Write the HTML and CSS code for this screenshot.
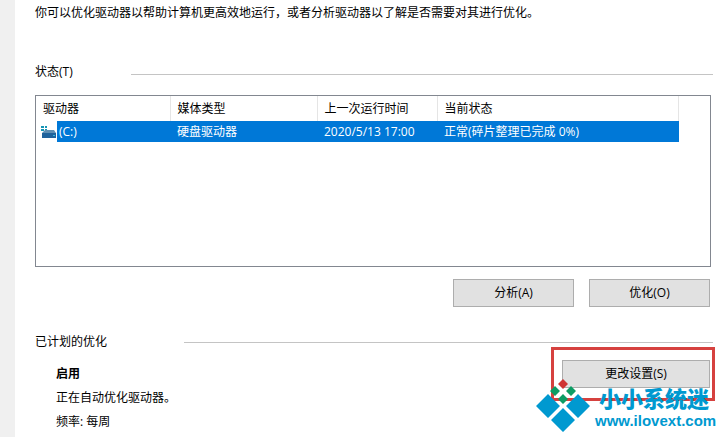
FILE: index.html
```
<!DOCTYPE html>
<html lang="zh-CN">
<head>
  <meta charset="UTF-8" />
  <meta name="viewport" content="width=device-width, initial-scale=1" />
  <title>优化驱动器</title>
  <link rel="stylesheet" href="styles.css">
</head>
<body>

  <main class="window">
    <p class="intro">你可以优化驱动器以帮助计算机更高效地运行，或者分析驱动器以了解是否需要对其进行优化。</p>

    <section class="status">
      <h2 class="section-title">状态(T)</h2>
      <div class="drive-list">
        <table aria-label="驱动器状态">
          <thead>
            <tr>
              <th scope="col" class="col-drive">驱动器</th>
              <th scope="col" class="col-media">媒体类型</th>
              <th scope="col" class="col-time">上一次运行时间</th>
              <th scope="col" class="col-state">当前状态</th>
            </tr>
          </thead>
          <tbody>
            <tr>
              <td class="drive-cell">
                <svg class="drive-icon" width="16" height="14" viewBox="0 0 16 14" aria-hidden="true">
                  <path fill="#1695b5" d="M0 1h3v2H0zM4 1h2v2H4zM0 4h3v2H0zM4 4h2v2H4z" />
                  <path fill="#5f8fb3" d="M4 5h9l2 3H1z" />
                  <path fill="#1f629c" d="M1 8h14v5H1z" />
                  <path fill="#39b8e0" d="M12 10h2v1h-2z" />
                </svg>
                <span class="drive-name">(C:)</span>
              </td>
              <td>硬盘驱动器</td>
              <td>2020/5/13 17:00</td>
              <td>正常(碎片整理已完成 0%)</td>
            </tr>
          </tbody>
        </table>
      </div>
      <div class="actions">
        <button type="button">分析(A)</button>
        <button type="button">优化(O)</button>
      </div>
    </section>

    <section class="schedule">
      <h2 class="section-title wide">已计划的优化</h2>
      <div class="schedule-body">
        <div class="schedule-info">
          <strong>启用</strong>
          <p>正在自动优化驱动器。</p>
          <p>频率: 每周</p>
        </div>
        <div class="settings">
          <button type="button">更改设置(S)</button>
          <div class="watermark">
            <svg width="54" height="54" viewBox="0 0 54 54" aria-hidden="true">
              <path fill="#d03434" d="M27 0l5 5-5 5-5-5z" />
              <path fill="#0c9c64" d="M19 7l5 5-5 5-5-5zM35 7l5 5-5 5-5-5zM27 15l5 5-5 5-5-5z" />
              <path fill="#0099d0" d="M12 15l12 12-12 12L0 27zM42 15l12 12-12 12-12-12zM27 29l12 12-12 12-12-12z" />
            </svg>
            <div class="brand">
              <span class="brand-name">小小系统迷</span>
              <span class="brand-url">www.ilovext.com</span>
            </div>
          </div>
        </div>
      </div>
    </section>
  </main>

</body>
</html>
```
FILE: styles.css
```
:root {
  --edge: #f0f0f0;
  --line: #c4c4c4;
  --frame: #828790;
  --select: #0078d7;
  --button: #e1e1e1;
  --mark: #d6413f;
  --brand: #0099d0;
}
* {
  box-sizing: border-box;
}
body {
  margin: 0;
  min-height: 100vh;
  border-left: 15px solid var(--edge);
  background-color: #fff;
  color: #000;
  font-family: "Open Sans", "Noto Sans CJK SC", sans-serif;
  font-size: 12px;
  line-height: 24px;
  overflow: hidden;
}
p {
  margin: 0;
}
.window {
  padding: 1px 12px 0 20px;
}
.section-title {
  display: flex;
  align-items: center;
  gap: 58px;
  margin: 0;
  font-size: 12px;
  font-weight: 400;
}
.section-title.wide {
  gap: 77px;
}
.section-title::after {
  content: "";
  flex: 1;
  height: 1px;
  margin-top: 4px;
  background-color: var(--line);
}
.section-title.wide::after {
  margin-top: 0;
}
.status {
  margin-top: 35px;
}
.drive-list {
  height: 172px;
  margin: 11px 2px 0 0;
  border: 1px solid var(--frame);
}
table {
  width: 643px;
  table-layout: fixed;
  border-collapse: collapse;
}
th, td {
  padding: 0 0 0 7px;
  text-align: left;
  font-weight: 400;
  white-space: nowrap;
}
th {
  height: 25px;
  border-right: 1px solid #e5e5e5;
}
td {
  height: 21px;
  line-height: 21px;
  background-color: var(--select);
  color: #fff;
}
.col-drive {
  width: 134px;
}
.col-media {
  width: 147px;
}
.col-time {
  width: 120px;
}
.drive-cell {
  display: flex;
  align-items: center;
  padding: 0;
  background-color: #fff;
}
.drive-icon {
  margin: 0 0 0 5px;
}
.drive-name {
  flex: 1;
  padding-left: 2px;
  background-color: var(--select);
}
.actions {
  display: flex;
  justify-content: flex-end;
  gap: 15px;
  margin: 12px 3px 0 0;
}
button {
  width: 121px;
  height: 28px;
  padding: 0;
  border: 1px solid #adadad;
  background-color: var(--button);
  color: #000;
  font: inherit;
}
.schedule {
  margin-top: 23px;
}
.schedule-body {
  display: flex;
  justify-content: space-between;
  padding-left: 21px;
}
.schedule-info {
  padding-top: 8px;
}
.settings {
  position: relative;
  width: 164px;
  height: 54px;
  margin: -7px -2px 0 0;
  border: 3px solid var(--mark);
}
.settings button {
  display: block;
  width: 148px;
  margin: 10px 0 0 8px;
}
/* site mark lies over the lower edge of the settings box */
.watermark {
  position: absolute;
  top: 29px;
  left: -18px;
  display: flex;
  gap: 5px;
  color: var(--brand);
}
.brand {
  display: flex;
  flex-direction: column;
  padding-top: 2px;
  white-space: nowrap;
}
.brand-name {
  padding-left: 4px;
  font-family: "Noto Sans CJK SC", sans-serif;
  font-size: 22px;
  font-weight: 900;
  line-height: 32px;
}
.brand-url {
  font-family: "Liberation Sans", sans-serif;
  font-size: 15px;
  font-weight: 700;
  line-height: 16px;
}
```
